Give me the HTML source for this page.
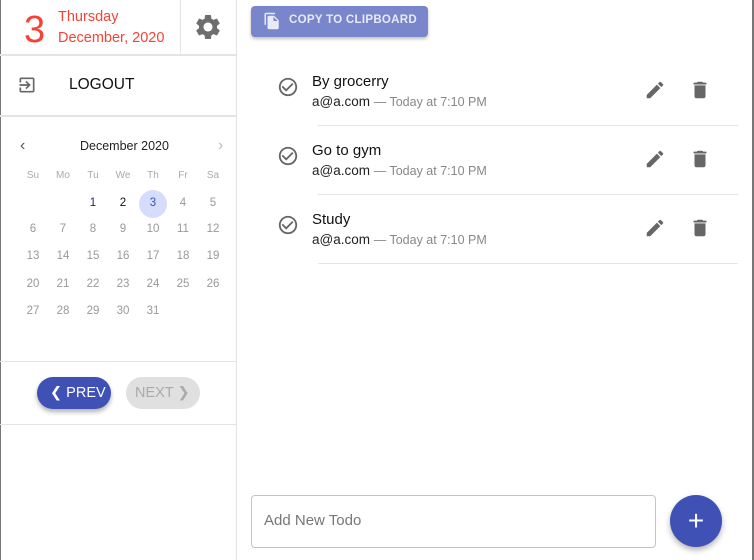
<!DOCTYPE html><html><head><style>
*{box-sizing:border-box;margin:0;padding:0}
body{width:754px;height:560px;position:relative;background:#fff;font-family:"Liberation Sans",sans-serif;overflow:hidden}
.a{position:absolute}
.ln{position:absolute;background:#e4e4e4}
.cal span{position:absolute;width:30px;text-align:center;font-size:11.5px;color:#999}
.t{font-size:15px;color:#111}
.s{font-size:13.5px;color:#222}
.s i{font-style:normal;color:#888;font-size:12.5px}
</style></head><body>
<div class="a" style="left:0;top:0;width:1px;height:560px;background:#777"></div>
<div class="a" style="left:752px;top:0;width:2px;height:560px;background:#777"></div>
<div class="ln" style="left:236px;top:0;width:1px;height:560px"></div>
<div class="ln" style="left:180px;top:0;width:1px;height:54px"></div>
<div class="ln" style="left:0;top:54px;width:236px;height:2px"></div>
<div class="ln" style="left:0;top:115px;width:236px;height:2px"></div>
<div class="ln" style="left:0;top:361px;width:236px;height:1px"></div>
<div class="ln" style="left:0;top:424px;width:236px;height:1px"></div>
<div class="a" style="left:24px;top:8px;font-size:38px;color:#f44336;line-height:44px">3</div>
<div class="a" style="left:58px;top:7px;font-size:14.5px;color:#f44336;line-height:21px">Thursday<br>December, 2020</div>
<svg class="a" style="left:193px;top:12px" width="30" height="30" viewBox="0 0 24 24"><path fill="#6e6e6e" d="M19.14 12.94c.04-.3.06-.61.06-.94 0-.32-.02-.64-.07-.94l2.030-1.58a.49.49 0 0 0 .12-.61l-1.92-3.32a.488.488 0 0 0-.59-.22l-2.39.96c-.5-.38-1.03-.7-1.62-.94l-.36-2.54a.484.484 0 0 0-.48-.41h-3.84c-.24 0-.43.17-.47.41l-.36 2.54c-.59.24-1.13.57-1.62.94l-2.39-.96c-.22-.08-.47 0-.59.22L2.74 8.87c-.12.21-.08.47.12.61l2.03 1.58c-.05.3-.09.63-.09.94s.02.64.07.94l-2.03 1.58a.49.49 0 0 0-.12.61l1.92 3.32c.12.22.37.29.59.22l2.39-.96c.5.38 1.03.7 1.62.94l.36 2.54c.05.24.24.41.48.41h3.84c.24 0 .44-.17.47-.41l.36-2.54c.59-.24 1.13-.56 1.62-.94l2.39.96c.22.08.47 0 .59-.22l1.92-3.32c.12-.22.07-.47-.12-.61l-2.010-1.58zM12 15.6c-1.98 0-3.6-1.62-3.6-3.6s1.62-3.6 3.6-3.6 3.6 1.62 3.6 3.6-1.62 3.6-3.6 3.6z"/></svg>
<svg class="a" style="left:17px;top:75px" width="20" height="20" viewBox="0 0 24 24"><path fill="#666" d="M10.09 15.59L11.5 17l5-5-5-5-1.41 1.41L12.67 11H3v2h9.67l-2.58 2.59zM19 3H5c-1.11 0-2 .9-2 2v4h2V5h14v14H5v-4H3v4c0 1.1.89 2 2 2h14c1.1 0 2-.9 2-2V5c0-1.1-.9-2-2-2z"/></svg>
<div class="a" style="left:69px;top:76px;font-size:15.5px;color:#111">LOGOUT</div>
<div class="a" style="left:20px;top:137px;font-size:16px;color:#555">‹</div>
<div class="a" style="left:218px;top:137px;font-size:16px;color:#bbb">›</div>
<div class="a" style="left:80px;top:139px;font-size:12.5px;color:#222">December 2020</div>
<div class="a" style="left:139px;top:190px;width:28px;height:28px;border-radius:50%;background:#d6dcfb"></div>
<div class="cal">
<span style="left:18px;top:170px;font-size:10px;color:#aaa">Su</span><span style="left:48px;top:170px;font-size:10px;color:#aaa">Mo</span><span style="left:78px;top:170px;font-size:10px;color:#aaa">Tu</span><span style="left:108px;top:170px;font-size:10px;color:#aaa">We</span><span style="left:138px;top:170px;font-size:10px;color:#aaa">Th</span><span style="left:168px;top:170px;font-size:10px;color:#aaa">Fr</span><span style="left:198px;top:170px;font-size:10px;color:#aaa">Sa</span>
<span style="left:78px;top:197px;color:#1a2a6a">1</span><span style="left:108px;top:197px;color:#111">2</span><span style="left:138px;top:197px;color:#3f51b5">3</span><span style="left:168px;top:197px">4</span><span style="left:198px;top:197px">5</span>
<span style="left:18px;top:223px">6</span><span style="left:48px;top:223px">7</span><span style="left:78px;top:223px">8</span><span style="left:108px;top:223px">9</span><span style="left:138px;top:223px">10</span><span style="left:168px;top:223px">11</span><span style="left:198px;top:223px">12</span>
<span style="left:18px;top:250px">13</span><span style="left:48px;top:250px">14</span><span style="left:78px;top:250px">15</span><span style="left:108px;top:250px">16</span><span style="left:138px;top:250px">17</span><span style="left:168px;top:250px">18</span><span style="left:198px;top:250px">19</span>
<span style="left:18px;top:278px">20</span><span style="left:48px;top:278px">21</span><span style="left:78px;top:278px">22</span><span style="left:108px;top:278px">23</span><span style="left:138px;top:278px">24</span><span style="left:168px;top:278px">25</span><span style="left:198px;top:278px">26</span>
<span style="left:18px;top:305px">27</span><span style="left:48px;top:305px">28</span><span style="left:78px;top:305px">29</span><span style="left:108px;top:305px">30</span><span style="left:138px;top:305px">31</span>
</div>
<div class="a" style="left:37px;top:377px;width:74px;height:32px;border-radius:16px;background:#3f51b5;box-shadow:0 3px 5px rgba(0,0,0,.3);color:#fff;font-size:14.5px;line-height:32px;padding-left:13px">❮ PREV</div>
<div class="a" style="left:126px;top:377px;width:74px;height:32px;border-radius:16px;background:#e0e0e0;color:#aaa;font-size:14.5px;line-height:32px;padding-left:9px">NEXT ❯</div>
<div class="a" style="left:251px;top:6px;width:177px;height:31px;border-radius:4px;background:#7986cb;box-shadow:0 2px 3px rgba(0,0,0,.25)"></div>
<svg class="a" style="left:263px;top:11px" width="18" height="20" viewBox="0 0 24 24"><path fill="#e8eaf6" d="M16 1H4c-1.1 0-2 .9-2 2v14h2V3h12V1zm-1 4l6 6v10c0 1.1-.9 2-2 2H7.990C6.89 23 6 22.1 6 21l.01-14c0-1.1.89-2 1.99-2h7zm-1 7h5.5L14 6.5V12z"/></svg>
<div class="a" style="left:289px;top:14px;font-size:11.5px;font-weight:bold;color:#e8eaf6;letter-spacing:.3px">COPY TO CLIPBOARD</div>
<div id="items"></div>
<div class="a" style="left:251px;top:495px;width:405px;height:53px;border:1px solid #c4c4c4;border-radius:4px"></div>
<div class="a" style="left:264px;top:512px;font-size:15px;color:#777">Add New Todo</div>
<div class="a" style="left:670px;top:495px;width:52px;height:52px;border-radius:50%;background:#3f51b5;box-shadow:0 3px 6px rgba(0,0,0,.3);color:#fff;font-size:28px;line-height:52px;text-align:center">+</div>
<script>
var t=["By grocerry","Go to gym","Study"],h="";
t.forEach(function(n,i){var y=i*69;
h+='<svg class="a" style="left:277px;top:'+(76+y)+'px" width="22" height="22" viewBox="0 0 24 24"><path fill="#666" d="M16.59 7.58L10 14.17l-3.59-3.58L5 12l5 5 8-8zM12 2C6.48 2 2 6.48 2 12s4.48 10 10 10 10-4.48 10-10S17.52 2 12 2zm0 18c-4.42 0-8-3.580-8-8s3.58-8 8-8 8 3.58 8 8-3.58 8-8 8z"/></svg>';
h+='<div class="a t" style="left:312px;top:'+(73+y)+'px">'+n+'</div>';
h+='<div class="a s" style="left:312px;top:'+(94+y)+'px">a@a.com <i>— Today at 7:10 PM</i></div>';
h+='<svg class="a" style="left:644px;top:'+(79+y)+'px" width="22" height="22" viewBox="0 0 24 24"><path fill="#666" d="M3 17.25V21h3.75L17.81 9.94l-3.75-3.75L3 17.25zM20.71 7.04a1 1 0 0 0 0-1.41l-2.34-2.34a1 1 0 0 0-1.41 0l-1.83 1.83 3.75 3.75 1.83-1.83z"/></svg>';
h+='<svg class="a" style="left:689px;top:'+(79+y)+'px" width="22" height="22" viewBox="0 0 24 24"><path fill="#666" d="M6 19c0 1.1.9 2 2 2h8c1.1 0 2-.9 2-2V7H6v12zM19 4h-3.5l-1-1h-5l-1 1H5v2h14V4z"/></svg>';
h+='<div class="ln" style="left:318px;top:'+(125+y)+'px;width:420px;height:1px"></div>';});
document.getElementById("items").innerHTML=h;
</script>
</body></html>
